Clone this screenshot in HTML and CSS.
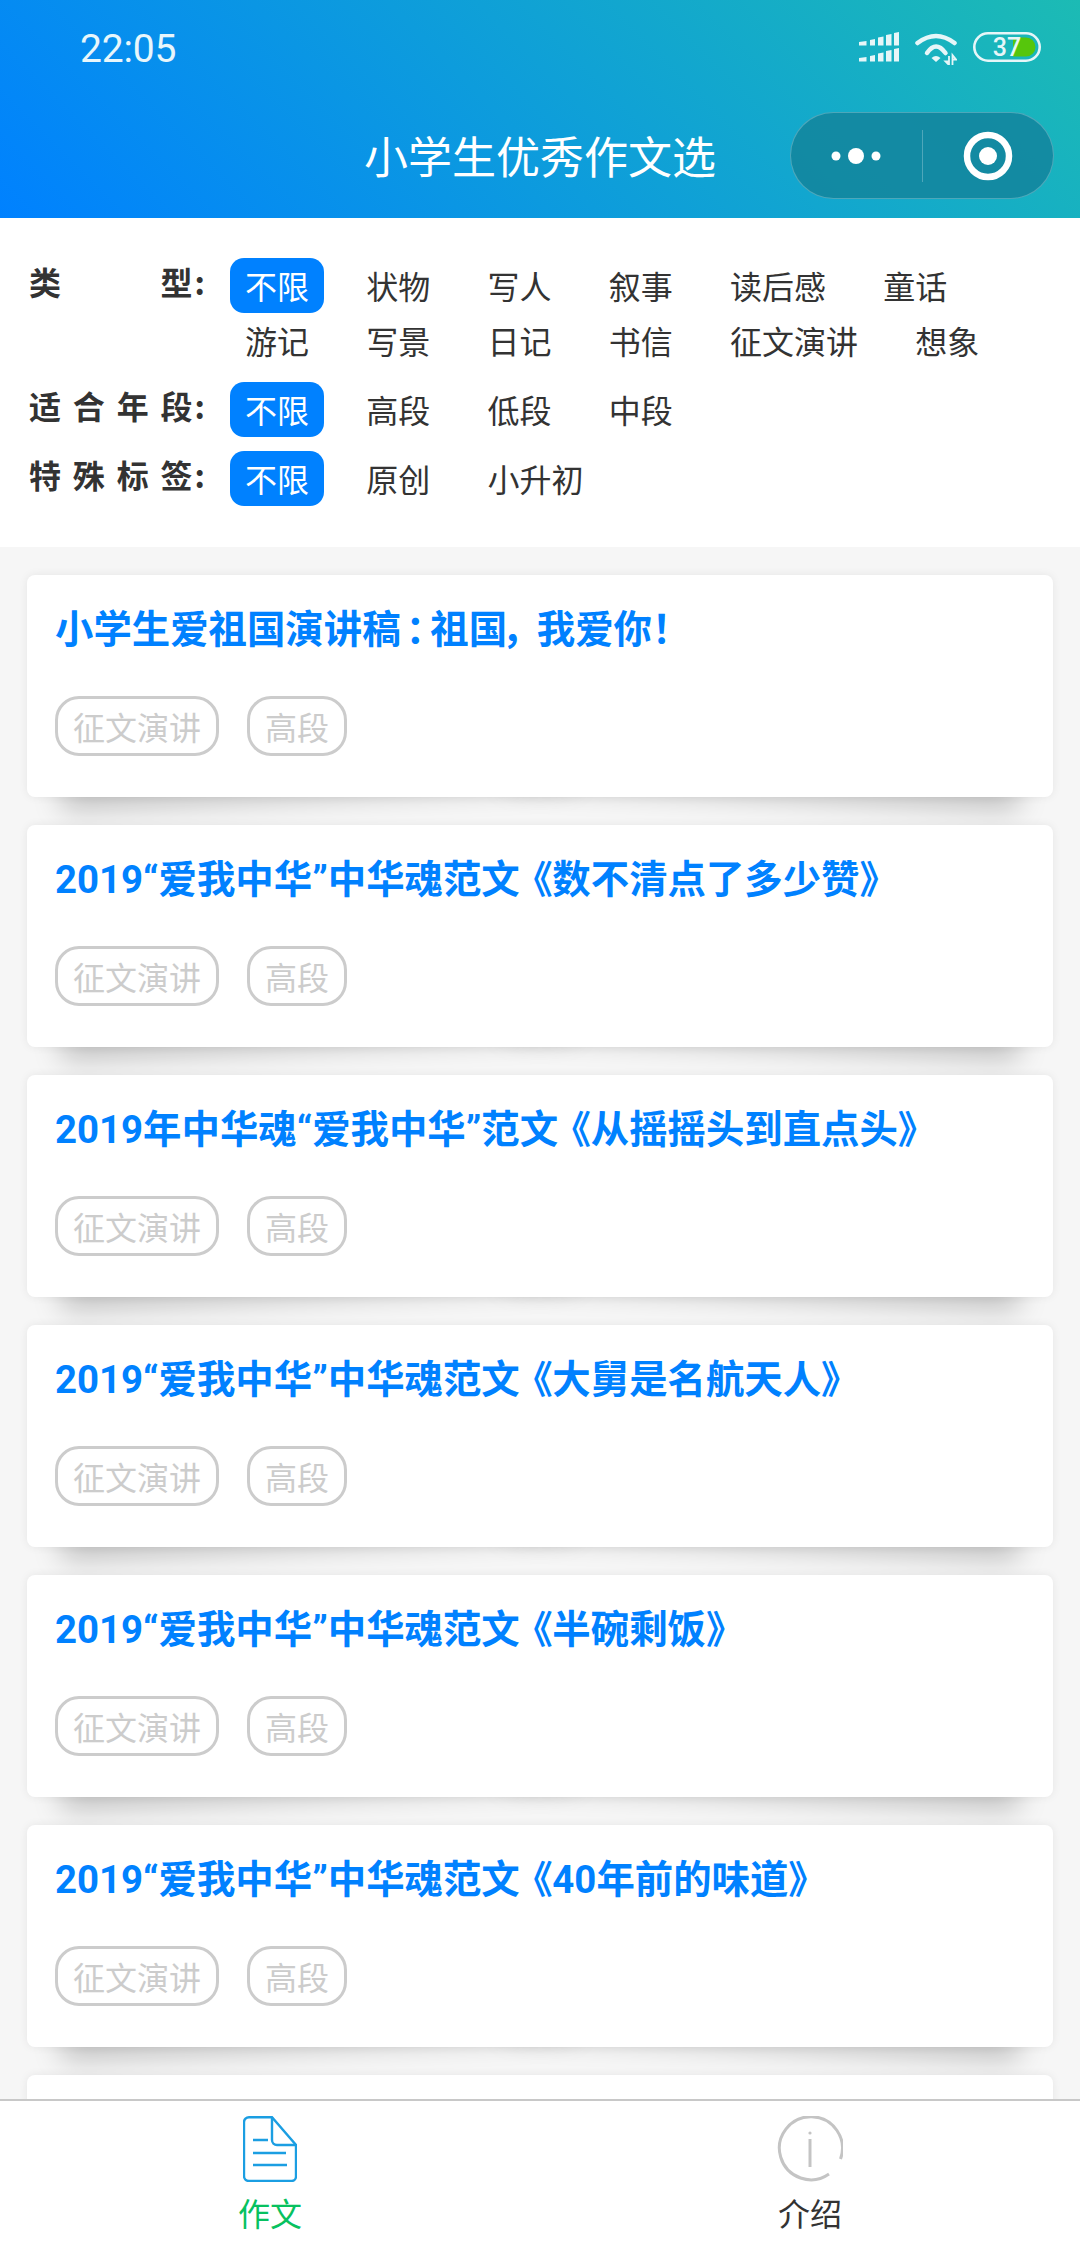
FILE: index.html
```html
<!DOCTYPE html>
<html lang="zh-CN">
<head>
<meta charset="utf-8">
<title>小学生优秀作文选</title>
<link rel="stylesheet" href="styles.css">
</head>
<body>
<div class="page">
  <header class="head">
    <div class="status">
      <span class="time">22:05</span>
      <div class="status-icons">
        <svg class="i-signal" viewBox="0 0 40 30" width="40" height="30">
          <g fill="#e6f6f8">
            <path d="M0 10l7.500-1v4.500H0zM11 8l5-1v6.500h-5zM19 5.500l5.500-1v9h-5.500zM27 3l5.500-1v11.500H27zM35 1l5-1v13.500h-5z"/>
            <path d="M0 26l7.500-1v4.500H0zM11 24l5-1v6.500h-5zM19 21.500l5.500-1v9h-5.500zM27 19l5.500-1v11.500H27zM35 17l5-1v13.500h-5z"/>
          </g>
        </svg>
        <svg class="i-wifi" viewBox="0 0 42 33" width="42" height="33">
          <g fill="none" stroke="#e6f6f8" stroke-width="4.500" stroke-linecap="round">
            <path d="M2.500 11Q21 -3 39.500 11"/>
            <path d="M12 21Q21 8 30.500 21"/>
          </g>
          <path d="M16.500 26Q21 22 25.500 26L21 30z" fill="#e6f6f8"/>
          <path d="M34 24v9l-3.500-3.500h3.500M37.500 33v-10l3.500 4.500h-3.500" fill="none" stroke="#e6f6f8" stroke-width="1.800"/>
        </svg>
        <svg class="i-batt" viewBox="0 0 68 30" width="68" height="30">
          <rect x="1.300" y="1.300" width="65.400" height="27.400" rx="13.700" fill="none" stroke="#e6f6f8" stroke-width="2.600"/>
          <path d="M40 5.500h13a9.500 9.500 0 0 1 0 19H40z" fill="#56c60c"/>
          <text class="batt-text" x="34" y="24">37</text>
        </svg>
      </div>
    </div>
    <nav class="nav">
      <h1 class="nav-title">小学生优秀作文选</h1>
      <div class="capsule">
        <div class="capsule-cell">
          <svg viewBox="0 0 60 20" width="60" height="20"><circle cx="10" cy="10" r="4.500" fill="#fff"/><circle cx="30" cy="10" r="8" fill="#fff"/><circle cx="50" cy="10" r="4.500" fill="#fff"/></svg>
        </div>
        <div class="capsule-line"></div>
        <div class="capsule-cell">
          <svg viewBox="0 0 50 50" width="50" height="50"><circle cx="25" cy="25" r="21" fill="none" stroke="#fff" stroke-width="6.500"/><circle cx="25" cy="25" r="9" fill="#fff"/></svg>
        </div>
      </div>
    </nav>
  </header>

  <section class="filter">
    <div class="filter-row">
      <div class="filter-label"><span>类</span><span class="label-end">型:</span></div>
      <div class="filter-options">
        <span class="opt on">不限</span><span class="opt">状物</span><span class="opt">写人</span><span class="opt">叙事</span><span class="opt">读后感</span><span class="opt">童话</span><span class="opt">游记</span><span class="opt">写景</span><span class="opt">日记</span><span class="opt">书信</span><span class="opt">征文演讲</span><span class="opt">想象</span>
      </div>
    </div>
    <div class="filter-row">
      <div class="filter-label"><span>适</span><span>合</span><span>年</span><span class="label-end">段:</span></div>
      <div class="filter-options">
        <span class="opt on">不限</span><span class="opt">高段</span><span class="opt">低段</span><span class="opt">中段</span>
      </div>
    </div>
    <div class="filter-row">
      <div class="filter-label"><span>特</span><span>殊</span><span>标</span><span class="label-end">签:</span></div>
      <div class="filter-options">
        <span class="opt on">不限</span><span class="opt">原创</span><span class="opt">小升初</span>
      </div>
    </div>
  </section>

  <main class="list">
    <article class="card">
      <h2 class="card-title">小学生爱祖国演讲稿<span class="p-colon">：</span>祖国<span class="p-comma">，</span>我爱你！</h2>
      <div class="tags"><span class="tag">征文演讲</span><span class="tag">高段</span></div>
    </article>
    <article class="card">
      <h2 class="card-title">2019“爱我中华”中华魂范文<span class="p-open">《</span>数不清点了多少赞》</h2>
      <div class="tags"><span class="tag">征文演讲</span><span class="tag">高段</span></div>
    </article>
    <article class="card">
      <h2 class="card-title">2019年中华魂“爱我中华”范文<span class="p-open">《</span>从摇摇头到直点头》</h2>
      <div class="tags"><span class="tag">征文演讲</span><span class="tag">高段</span></div>
    </article>
    <article class="card">
      <h2 class="card-title">2019“爱我中华”中华魂范文<span class="p-open">《</span>大舅是名航天人》</h2>
      <div class="tags"><span class="tag">征文演讲</span><span class="tag">高段</span></div>
    </article>
    <article class="card">
      <h2 class="card-title">2019“爱我中华”中华魂范文<span class="p-open">《</span>半碗剩饭》</h2>
      <div class="tags"><span class="tag">征文演讲</span><span class="tag">高段</span></div>
    </article>
    <article class="card">
      <h2 class="card-title">2019“爱我中华”中华魂范文<span class="p-open">《</span>40年前的味道》</h2>
      <div class="tags"><span class="tag">征文演讲</span><span class="tag">高段</span></div>
    </article>
    <article class="card"></article>
  </main>

  <footer class="tabbar">
    <div class="tab tab-on">
      <svg viewBox="0 0 54 66" width="54" height="66">
        <path d="M29 1.200H6a5 5 0 0 0-5 5V60a5 5 0 0 0 5 5h42.500a4.500 4.500 0 0 0 4.500-4.500V29z" fill="none" stroke="#1b9ee2" stroke-width="2.400"/>
        <path d="M29 1.200V24a5 5 0 0 0 5 5h19" fill="none" stroke="#1b9ee2" stroke-width="2.400"/>
        <path d="M10 24h15M10 37h33M10 49h34" fill="none" stroke="#1b9ee2" stroke-width="2.400"/>
      </svg>
      <span class="tab-text">作文</span>
    </div>
    <div class="tab">
      <svg viewBox="0 0 66 66" width="66" height="66">
        <path d="M63.500 43A31.500 31.500 0 1 0 52 58" fill="none" stroke="#c4c4c4" stroke-width="3"/>
        <circle cx="33" cy="17" r="1.600" fill="#c4c4c4"/>
        <path d="M33 23v28" fill="none" stroke="#c4c4c4" stroke-width="3"/>
      </svg>
      <span class="tab-text">介绍</span>
    </div>
  </footer>
</div>
</body>
</html>
```
FILE: styles.css
```css
* { box-sizing: border-box; margin: 0; padding: 0; }
html, body { width: 1080px; height: 2248px; overflow: hidden; }
body { font-family: Roboto, "Noto Sans CJK SC", sans-serif; color: #333; background: #fff; }
.page { width: 1080px; height: 2248px; display: flex; flex-direction: column; overflow: hidden; }

.head { height: 218px; flex: none; background: linear-gradient(45deg, #0081ff, #1cbbb4); color: #fff; }
.status { height: 92px; display: flex; justify-content: space-between; align-items: flex-start; padding: 29px 39px 0 80px; }
.time { font-size: 39px; line-height: 40px; font-weight: 400; color: #e8f6fb; letter-spacing: -0.2px; }
.status-icons { display: flex; align-items: flex-start; gap: 16px; padding-top: 3px; }
.i-signal, .i-wifi, .i-batt { display: block; }
.batt-text { font-family: Roboto, sans-serif; font-size: 25px; font-weight: 500; fill: #e6f6f8; text-anchor: middle; }

.nav { height: 126px; position: relative; display: flex; align-items: center; justify-content: center; }
.nav-title { font-family: "Noto Sans CJK SC", sans-serif; font-size: 44px; font-weight: 400; line-height: 60px; color: #fff; }
.capsule { position: absolute; left: 790px; top: 20px; width: 264px; height: 87px; border-radius: 44px; background: rgba(19, 134, 158, 0.9); border: 1px solid rgba(255, 255, 255, 0.25); display: flex; align-items: center; }
.capsule-cell { flex: 1; display: flex; align-items: center; justify-content: center; }
.capsule-line { width: 1px; height: 52px; background: rgba(255, 255, 255, 0.25); }

.filter { flex: none; height: 329px; padding: 40px 0 0 29px; font-family: "Noto Sans CJK SC", sans-serif; display: flex; flex-direction: column; gap: 14px; }
.filter-row { display: flex; }
.filter-label { width: 178px; height: 47px; flex: none; margin-right: 23px; display: flex; justify-content: space-between; font-size: 32px; font-weight: 700; line-height: 47px; color: #333; }
.label-end { letter-spacing: 2px; }
.filter-options { flex: 1; display: flex; flex-wrap: wrap; padding-right: 30px; column-gap: 27.25px; }
.opt { height: 55px; line-height: 55px; padding: 0 15px; font-size: 32px; color: #333; border-radius: 14px; }
.opt.on { background: #0081ff; color: #fff; }

.list { flex: 1; min-height: 0; overflow: hidden; background: #f6f6f6; padding: 28px 27px 0; isolation: isolate; font-family: Roboto, "Noto Sans CJK SC", sans-serif; }
.card { position: relative; height: 222px; margin-bottom: 28px; padding: 27px 28px 0; background: #fff; border-radius: 8px; box-shadow: 0 0 10px rgba(0, 0, 0, 0.07); }
.card::before, .card::after { content: ""; position: absolute; z-index: -1; top: 29px; bottom: 43px; width: 50%; box-shadow: 0 43px 29px rgba(0, 0, 0, 0.22); }
.card::before { left: 29px; transform: rotate(-3deg); }
.card::after { right: 29px; transform: rotate(3deg); }
.card-title { font-size: 38.4px; font-weight: 700; line-height: 56px; color: #0081ff; white-space: nowrap; }
.p-open, .p-colon, .p-comma { display: inline-block; font-feature-settings: "palt"; }
.p-open { width: 0.85em; text-align: right; }
.p-colon { width: 0.775em; text-align: center; }
.p-comma { width: 0.775em; text-align: left; }
.tags { display: flex; gap: 28px; margin-top: 38px; }
.tag { height: 60px; line-height: 54px; padding: 0 15px; border: 3px solid #ccc; border-radius: 24px; font-family: "Noto Sans CJK SC", sans-serif; font-size: 32px; color: #ccc; }

.tabbar { flex: none; height: 149px; display: flex; background: #fff; border-top: 2px solid #c8c8c8; font-family: "Noto Sans CJK SC", sans-serif; }
.tab { flex: 1; display: flex; flex-direction: column; align-items: center; padding-top: 15px; }
.tab svg { display: block; }
.tab-text { font-size: 32px; line-height: 46px; margin-top: 7px; color: #333; }
.tab-on .tab-text { color: #07c160; }
```
